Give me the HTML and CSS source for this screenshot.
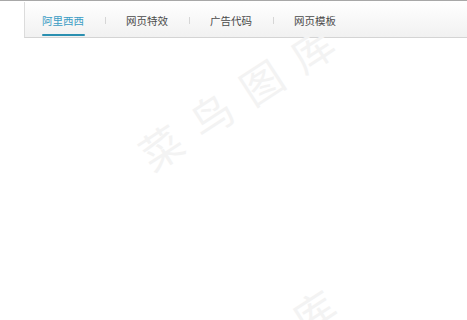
FILE: index.html
```html
<!DOCTYPE html>
<html lang="zh">
<head>
<meta charset="utf-8">
<title>导航</title>
<link rel="stylesheet" href="styles.css">
</head>
<body>
<div class="topline"></div>
<nav class="nav">
  <a class="item active">阿里西西</a>
  <span class="sep"></span>
  <a class="item">网页特效</a>
  <span class="sep"></span>
  <a class="item">广告代码</a>
  <span class="sep"></span>
  <a class="item">网页模板</a>
</nav>
<div class="wm wm1">菜鸟图库</div>
<div class="wm wm2">菜鸟图库</div>
</body>
</html>
```
FILE: styles.css
```css
html, body {
  margin: 0;
  padding: 0;
  background: #fff;
  width: 467px;
  height: 320px;
  overflow: hidden;
  position: relative;
  font-family: "Noto Sans CJK SC", "Liberation Sans", sans-serif;
}
.topline {
  height: 1px;
  background: #a8a8a8;
  margin-bottom: 1px;
}
.nav {
  margin-left: 24px;
  height: 35px;
  display: flex;
  align-items: center;
  padding-left: 17px;
  border-left: 1px solid #dcdcdc;
  border-bottom: 1px solid #d4d4d4;
  background: linear-gradient(#ffffff, #f1f1f1);
}
.item {
  position: relative;
  font-size: 10.5px;
  color: #4a4a4a;
  line-height: 14px;
  padding-top: 2px;
  width: 43px;
  white-space: nowrap;
  margin-right: 20px;
}
.item.active {
  color: #3b9cc4;
}
.item.active::after {
  content: "";
  position: absolute;
  left: 0;
  right: 0;
  top: 22px;
  height: 2px;
  border-radius: 1px;
  background: #2a8fb0;
}
.sep {
  width: 1px;
  height: 7px;
  background: #d6d6d6;
  margin-right: 20px;
  margin-top: 2px;
}
.wm {
  position: absolute;
  font-size: 42px;
  letter-spacing: 18px;
  color: #f3f3f3;
  white-space: nowrap;
  transform: translate(-50%, -50%) rotate(-33deg);
  pointer-events: none;
}
.wm1 { left: 243px; top: 92px; }
.wm2 { left: 245px; top: 355px; }
```
